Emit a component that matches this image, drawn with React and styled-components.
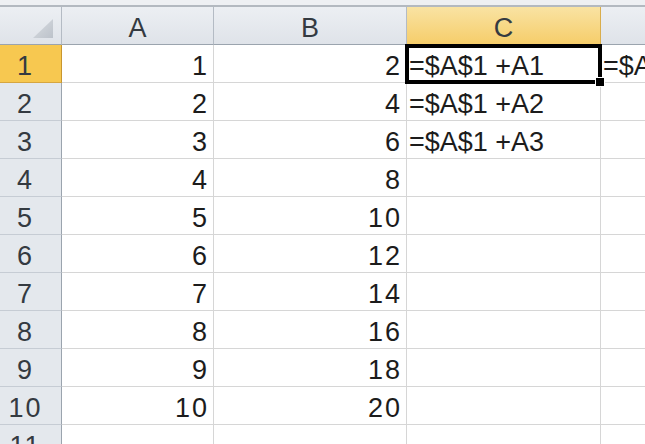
import React from 'react';
import styled, { createGlobalStyle, css } from 'styled-components';

const GlobalStyle = createGlobalStyle`
  html, body {
    margin: 0;
    padding: 0;
    background: #ffffff;
    overflow: hidden;
  }
`;

const Page = styled.div`
  width: 645px;
  height: 444px;
  overflow: hidden;
  font-family: "Liberation Sans", Arial, sans-serif;
  color: #1c1c1c;
`;

const TopStrip = styled.div`
  height: 5px;
  background: #eef0f3;
  border-bottom: 2px solid #b3b9c0;
`;

const Grid = styled.div`
  display: grid;
  grid-template-columns: 62px 152px 193px 194px 200px;
  grid-auto-rows: 38px;
`;

const headerBase = css`
  box-sizing: border-box;
  display: flex;
  align-items: flex-end;
  justify-content: center;
  font-size: 27px;
  line-height: 1.15;
  color: #343a41;
  background: linear-gradient(#eceff3, #dfe3e9);
`;

const Corner = styled.div`
  ${headerBase};
  justify-content: flex-end;
  padding: 0 8px 6px 0;
  border-right: 1px solid #b4bbc4;
  border-bottom: 1px solid #9ba4ae;
`;

const ColHeader = styled.div`
  ${headerBase};
  border-right: 1px solid #b4bbc4;
  border-bottom: 1px solid #9ba4ae;
  ${({ $active }) =>
    $active &&
    css`
      background: linear-gradient(#f9e3a3, #f6cd6a);
      border-right-color: #d9ad4c;
      border-bottom-color: #c99a3a;
    `}
`;

const RowHeader = styled.div`
  ${headerBase};
  background: #e4e8ed;
  padding-right: 10px;
  letter-spacing: 2px;
  border-right: 1px solid #9ba4ae;
  border-bottom: 1px solid #c6ccd4;
  ${({ $active }) =>
    $active &&
    css`
      background: #f7c850;
      border-right-color: #c8962f;
      border-bottom-color: #d6a640;
    `}
`;

const Cell = styled.div`
  position: relative;
  box-sizing: border-box;
  display: flex;
  align-items: flex-end;
  justify-content: ${({ $align }) => ($align === 'right' ? 'flex-end' : 'flex-start')};
  padding: ${({ $align }) => ($align === 'right' ? '0 4px 0 0' : '0 0 0 2px')};
  letter-spacing: ${({ $align }) => ($align === 'right' ? '2px' : '0')};
  font-size: 27px;
  line-height: 1.15;
  white-space: nowrap;
  overflow: visible;
  border-right: 1px solid #d6d6d6;
  border-bottom: 1px solid #d6d6d6;
`;

const Selection = styled.div`
  position: absolute;
  left: -2px;
  top: -1px;
  right: -2px;
  bottom: -2px;
  border: 4px solid #000;
  z-index: 2;
  pointer-events: none;
`;

const FillHandle = styled.div`
  position: absolute;
  right: -5px;
  bottom: -5px;
  width: 8px;
  height: 8px;
  background: #000;
  border: 1px solid #fff;
  z-index: 3;
`;

const rows = Array.from({ length: 11 }, (_, i) => i + 1);

function CornerTriangle() {
  return (
    <svg width="20" height="19" viewBox="0 0 20 19">
      <defs>
        <linearGradient id="tri" x1="0" y1="0" x2="1" y2="1">
          <stop offset="0" stopColor="#d9dde2" />
          <stop offset="1" stopColor="#bcc2ca" />
        </linearGradient>
      </defs>
      <polygon points="20,0 20,19 0,19" fill="url(#tri)" />
    </svg>
  );
}

export default function App() {
  return (
    <Page>
      <GlobalStyle />
      <TopStrip />
      <Grid>
        <Corner>
          <CornerTriangle />
        </Corner>
        <ColHeader>A</ColHeader>
        <ColHeader>B</ColHeader>
        <ColHeader $active>C</ColHeader>
        <ColHeader />

        {rows.map((r) => (
          <React.Fragment key={r}>
            <RowHeader $active={r === 1}>{r}</RowHeader>
            <Cell $align="right">{r <= 10 ? r : ''}</Cell>
            <Cell $align="right">{r <= 10 ? r * 2 : ''}</Cell>
            <Cell>
              {r <= 3 ? `=$A$1 +A${r}` : ''}
              {r === 1 && (
                <>
                  <Selection />
                  <FillHandle />
                </>
              )}
            </Cell>
            <Cell>{r === 1 ? '=$A$1 +B1' : ''}</Cell>
          </React.Fragment>
        ))}
      </Grid>
    </Page>
  );
}
